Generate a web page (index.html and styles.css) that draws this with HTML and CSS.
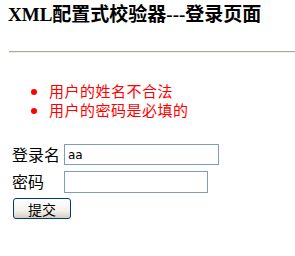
FILE: index.html
```html
<!DOCTYPE html>
<html lang="zh-CN">
<head>
  <meta charset="UTF-8">
  <title>XML配置式校验器---登录页面</title>
  <link rel="stylesheet" href="styles.css">
</head>
<body>
  <h3 class="title">XML配置式校验器---登录页面</h3>
  <hr class="rule">

  <ul class="errors">
    <li>用户的姓名不合法</li>
    <li>用户的密码是必填的</li>
  </ul>

  <form class="login" action="#" method="post">
    <div class="row">
      <label class="label" for="username">登录名</label>
      <input class="field field-name" id="username" type="text" value="aa">
    </div>
    <div class="row">
      <label class="label" for="password">密码</label>
      <input class="field field-pass" id="password" type="password">
    </div>
    <div class="row">
      <button class="submit" type="submit">提交</button>
    </div>
  </form>
</body>
</html>
```

FILE: styles.css
```css
body {
  margin: 0;
  padding: 0 0 0 8px;
  background: #ffffff;
  color: #000000;
  font-family: "Liberation Serif", "Noto Sans CJK SC", serif;
  font-size: 16px;
}

.title {
  margin: 0;
  padding-top: 5px;
  font-size: 19px;
  line-height: 20px;
  font-weight: bold;
}

.rule {
  margin: 26px 0 0 1px;
  height: 0;
  border: 0;
  border-top: 1px solid #aca899;
  border-bottom: 1px solid #f1efe2;
}

.errors {
  margin: 28px 0 0 0;
  padding-left: 41px;
  color: #ff0000;
  font-family: "Noto Sans CJK SC", sans-serif;
  font-size: 15px;
  line-height: 19px;
  list-style: disc;
}

.errors li {
  letter-spacing: 0.5px;
}

.login {
  margin-top: 25px;
  padding-left: 4px;
  font-family: "Noto Sans CJK SC", sans-serif;
}

.row {
  display: flex;
  align-items: center;
  height: 21px;
  margin-bottom: 6px;
}

.label {
  width: 52px;
  font-size: 16px;
  line-height: 21px;
}

.field {
  box-sizing: border-box;
  height: 21px;
  margin: 0;
  padding: 1px 3px;
  border: 1px solid #7f9db9;
  font-family: "DejaVu Sans", sans-serif;
  font-size: 12px;
  color: #000000;
  outline: none;
}

.field-name {
  width: 155px;
}

.field-pass {
  width: 144px;
  height: 22px;
}

.submit {
  box-sizing: border-box;
  width: 58px;
  height: 21px;
  margin: 0 0 0 1px;
  padding: 0;
  border: 1px solid #003c74;
  border-radius: 3px;
  background: linear-gradient(#ffffff, #f3f2ec 60%, #d6d0c5);
  font-family: "Noto Sans CJK SC", sans-serif;
  font-size: 14px;
  line-height: 18px;
  color: #000000;
}
```
